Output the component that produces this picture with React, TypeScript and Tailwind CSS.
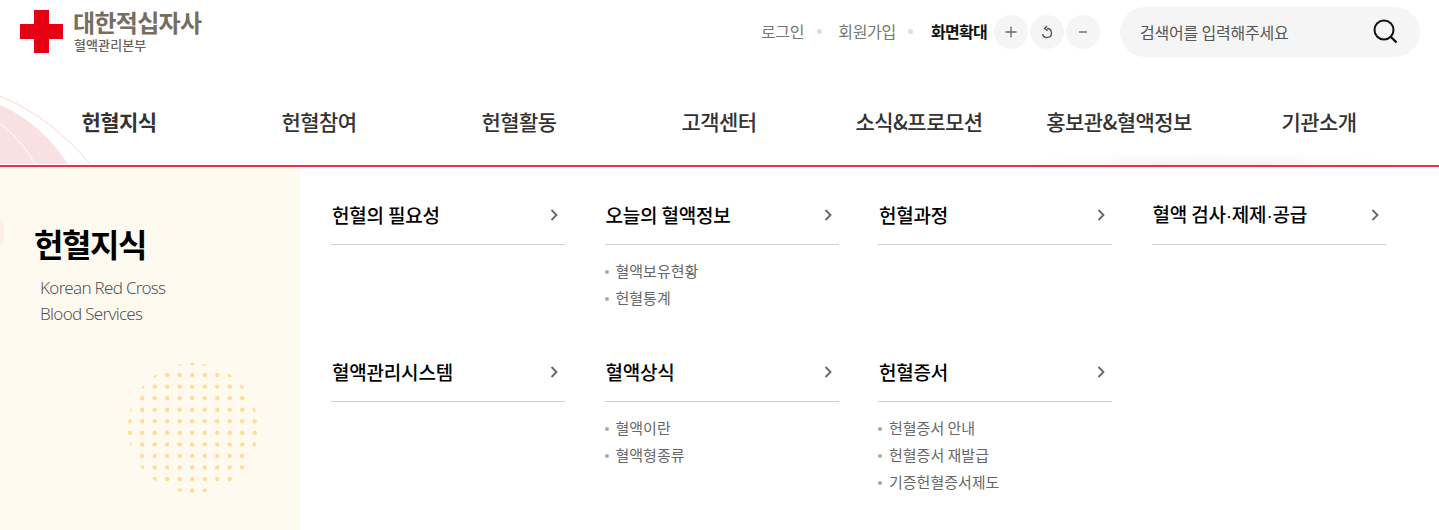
const navItems = ["헌혈지식", "헌혈참여", "헌혈활동", "고객센터", "소식&프로모션", "홍보관&혈액정보", "기관소개"];

const menus = [
  { title: "헌혈의 필요성", links: [] },
  { title: "오늘의 혈액정보", links: ["혈액보유현황", "헌혈통계"] },
  { title: "헌혈과정", links: [] },
  { title: "혈액 검사·제제·공급", links: [] },
  { title: "혈액관리시스템", links: [] },
  { title: "혈액상식", links: ["혈액이란", "혈액형종류"] },
  { title: "헌혈증서", links: ["헌혈증서 안내", "헌혈증서 재발급", "기증헌혈증서제도"] },
];

function DotCircle() {
  const dots = [];
  for (let i = 0; i < 11; i++) {
    for (let j = 0; j < 12; j++) {
      dots.push(<circle key={i + "-" + j} cx={2.7 + i * 12.5} cy={1.5 + j * 11.55} r="2.2" />);
    }
  }
  return (
    <svg width="132" height="132" viewBox="0 0 132 132" className="absolute left-[127px] top-[195px]" fill="#ffdd98">
      <defs>
        <clipPath id="dot-clip">
          <circle cx="66" cy="66" r="65" />
        </clipPath>
      </defs>
      <g clipPath="url(#dot-clip)">{dots}</g>
    </svg>
  );
}

function MenuBlock({ title, links }: { title: string; links: string[] }) {
  const parts = title.split("·");
  return (
    <div className="h-[157px]">
      <div className="flex items-center justify-between h-[56px] border-b border-[#cfcfcf] pl-px pr-[6px] pb-[3px]">
        <span className="text-[19px] font-medium text-black tracking-[-0.2px]">
          {parts.map((p, i) => (
            <span key={p}>
              {i > 0 && <span className="font-['Liberation_Sans']">·</span>}
              {p}
            </span>
          ))}
        </span>
        <svg width="10" height="14" viewBox="0 0 10 14" fill="none" stroke="#666" strokeWidth="1.8">
          <path d="M2.5 2 L7.5 7 L2.5 12" />
        </svg>
      </div>
      <ul className="pt-[13px]">
        {links.map((l) => (
          <li key={l} className="flex items-center h-[27px] text-[15px] text-[#666]">
            <span className="w-[4px] h-[4px] rounded-full bg-[#aaa] mr-[7px]" />
            {l}
          </li>
        ))}
      </ul>
    </div>
  );
}

export default function App() {
  return (
    <div className="relative w-[1439px] h-[530px] overflow-hidden bg-white font-['Noto_Sans_CJK_KR','Noto_Sans',sans-serif]">
      {/* top bar */}
      <div className="relative z-10 flex items-center justify-between h-[62px] pl-[20px] pr-[19px]">
        <div className="flex items-center gap-[10px]">
          <svg width="43" height="43" viewBox="0 0 43 43" fill="#e60012">
            <path d="M14 0H29V14H43V29H29V43H14V29H0V14H14Z" />
          </svg>
          <div className="flex flex-col">
            <span className="text-[24px] leading-[26px] font-bold text-[#776d5f] tracking-[-0.7px]">대한적십자사</span>
            <span className="text-[13px] leading-[16px] mt-[2px] font-medium text-[#6b6257] ml-px tracking-[0.1px]">혈액관리본부</span>
          </div>
        </div>
        <div className="flex items-center">
          <span className="text-[16px] text-[#777] tracking-[-0.3px]">로그인</span>
          <span className="w-[5px] h-[5px] rounded-full bg-[#ddd] ml-[13px] mr-[16px]" />
          <span className="text-[16px] text-[#777] tracking-[-0.3px]">회원가입</span>
          <span className="w-[5px] h-[5px] rounded-full bg-[#ddd] ml-[12px] mr-[18px]" />
          <span className="text-[16px] font-bold text-[#111] tracking-[-0.7px]">화면확대</span>
          <div className="flex gap-[2px] ml-[7px] mr-[20px] mt-px">
            <button className="flex items-center justify-center w-[34px] h-[34px] rounded-full bg-[#f5f5f5]">
              <svg width="12" height="12" viewBox="0 0 12 12" stroke="#666" strokeWidth="1.3"><path d="M6 0.5V11.5M0.5 6H11.5" /></svg>
            </button>
            <button className="flex items-center justify-center w-[34px] h-[34px] rounded-full bg-[#f5f5f5]">
              <svg width="14" height="14" viewBox="0 0 14 14" fill="none" stroke="#555" strokeWidth="1.3">
                <path d="M7 3.5 A4.5 4.5 0 1 1 2.6 9" />
                <path d="M7 1 L4.6 3.5 L7.6 5.6" />
              </svg>
            </button>
            <button className="flex items-center justify-center w-[34px] h-[34px] rounded-full bg-[#f5f5f5]">
              <svg width="8" height="2" viewBox="0 0 8 2" stroke="#666" strokeWidth="1.4"><path d="M0 1H8" /></svg>
            </button>
          </div>
          <div className="flex items-center justify-between w-[300px] h-[50px] mt-px rounded-[25px] bg-[#f5f5f5] pl-[20px] pr-[22px]">
            <span className="text-[16px] text-[#555] tracking-[-0.2px]">검색어를 입력해주세요</span>
            <svg width="25" height="25" viewBox="0 0 25 25" fill="none" stroke="#111">
              <circle cx="11" cy="11" r="9.5" strokeWidth="2" />
              <path d="M18 18L23.5 23.5" strokeWidth="2.4" />
            </svg>
          </div>
        </div>
      </div>

      {/* nav */}
      <nav className="relative h-[105px] border-b-2 border-[#ee2f3f]">
        <svg width="100" height="72" viewBox="0 0 100 72" className="absolute left-0 bottom-0" fill="none">
          <path d="M0 12 C28 24 50 44 68 71 H0Z" fill="#f9e1e3" />
          <path d="M0 3 C36 18 66 42 90 71" stroke="#f9d5d8" strokeWidth="1" />
          <path d="M0 31 C14 41 26 55 35 71" stroke="#fff" strokeWidth="1" />
        </svg>
        <div className="absolute left-[1010px] right-[30px] bottom-0 h-[12px] bg-[radial-gradient(ellipse_at_bottom,#f2f2f2,transparent_70%)]" />
        <ul className="relative flex h-full pl-[19px] pt-[17px]">
          {navItems.map((n, i) => (
            <li key={n} className={"flex w-[200px] items-center justify-center text-[21px] tracking-[-0.55px] text-[#333] " + (i === 0 ? "font-bold" : "font-medium")}>
              {n}
            </li>
          ))}
        </ul>
      </nav>

      {/* panel */}
      <div className="flex h-[363px]">
        <aside className="relative w-[300px] shrink-0 bg-[#fffaf0] overflow-hidden">
          <div className="absolute -left-[16px] top-[50px] w-[20px] h-[30px] rounded-full bg-[#fdeeea]" />
          <h2 className="pt-[52px] pl-[34px] text-[32px] leading-[48px] font-bold text-black tracking-[-1.4px]">헌혈지식</h2>
          <p className="mt-[8px] pl-[40px] text-[17px] leading-[26px] text-[#555] tracking-[-0.7px] font-['Noto_Sans',sans-serif] font-light">
            Korean Red Cross
            <br />
            Blood Services
          </p>
          <DotCircle />
        </aside>
        <div className="grid grid-cols-4 gap-x-[39.5px] content-start pl-[31px] pr-[53.5px] pt-[22px] flex-1">
          {menus.map((m) => (
            <MenuBlock key={m.title} title={m.title} links={m.links} />
          ))}
        </div>
      </div>
    </div>
  );
}
